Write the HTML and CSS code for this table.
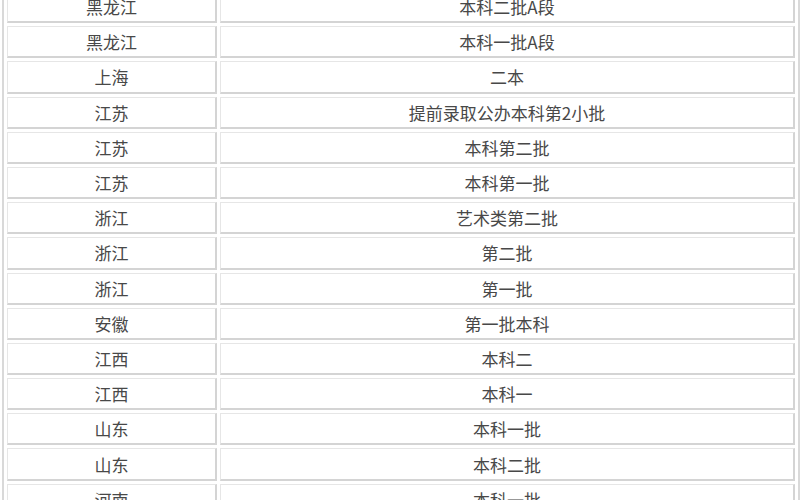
FILE: index.html
```html
<!DOCTYPE html>
<html lang="zh-CN">
<head>
<meta charset="utf-8">
<title>批次表</title>
<link rel="stylesheet" href="styles.css">
</head>
<body>
<div class="wrap">
<table class="t">
<colgroup><col class="c1"><col class="c2"></colgroup>
<tbody>
<tr><td>黑龙江</td><td>本科二批A段</td></tr>
<tr><td>黑龙江</td><td>本科一批A段</td></tr>
<tr><td>上海</td><td>二本</td></tr>
<tr><td>江苏</td><td>提前录取公办本科第2小批</td></tr>
<tr><td>江苏</td><td>本科第二批</td></tr>
<tr><td>江苏</td><td>本科第一批</td></tr>
<tr><td>浙江</td><td>艺术类第二批</td></tr>
<tr><td>浙江</td><td>第二批</td></tr>
<tr><td>浙江</td><td>第一批</td></tr>
<tr><td>安徽</td><td>第一批本科</td></tr>
<tr><td>江西</td><td>本科二</td></tr>
<tr><td>江西</td><td>本科一</td></tr>
<tr><td>山东</td><td>本科一批</td></tr>
<tr><td>山东</td><td>本科二批</td></tr>
<tr><td>河南</td><td>本科一批</td></tr>
</tbody>
</table>
</div>
</body>
</html>
```
FILE: styles.css
```css
html, body {
  margin: 0;
  padding: 0;
  background: #ffffff;
  overflow: hidden;
}
.wrap {
  padding-left: 2px;
  margin-top: -12px;
}
.t {
  border-collapse: separate;
  border-spacing: 3px;
  border-left: 2px solid #d9d9d9;
  border-right: 2px solid #d9d9d9;
  table-layout: fixed;
  width: 798px;
  font-family: "Noto Sans CJK SC", "Noto Sans", sans-serif;
  font-size: 17px;
  color: #484848;
}
.c1 { width: 210px; }
.t td {
  box-sizing: border-box;
  height: 32.2px;
  padding: 0;
  text-align: center;
  vertical-align: middle;
  border-top: 1px solid #e6e6e6;
  border-left: 1px solid #e6e6e6;
  border-right: 2px solid #d4d4d4;
  border-bottom: 2px solid #d4d4d4;
  line-height: 1;
}
```
